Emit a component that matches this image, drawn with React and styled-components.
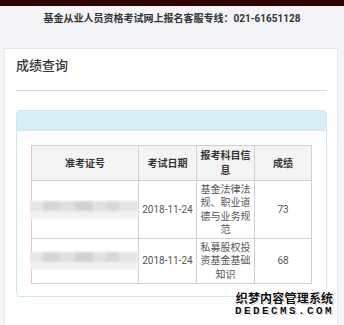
import React from "react";
import styled, { createGlobalStyle } from "styled-components";

const GlobalStyle = createGlobalStyle`
  html, body {
    margin: 0;
    padding: 0;
    background: #f3f4f7;
    font-family: Roboto, "Noto Sans CJK SC", sans-serif;
  }
`;

const Page = styled.div`
  position: relative;
  width: 344px;
  min-height: 100vh;
  display: flex;
  flex-direction: column;
`;

const TopBar = styled.div`
  height: 6px;
  background: #310000;
`;

const Hotline = styled.div`
  height: 42px;
  box-sizing: border-box;
  padding-top: 6px;
  text-align: center;
  font-size: 10px;
  line-height: 14px;
  font-weight: bold;
  color: #333;
`;

const Card = styled.div`
  flex: 1;
  margin: 0 6px 0 4px;
  padding: 0 10px 0 11px;
  background: #fff;
  border-top: 1px solid #e3e3e3;
  border-left: 1px solid #e8e8ec;
  border-right: 1px solid #e8e8ec;
`;

const Title = styled.h3`
  margin: 0;
  padding-top: 8px;
  padding-bottom: 15px;
  font-size: 13px;
  line-height: 18px;
  font-weight: 500;
  color: #333;
  border-bottom: 1px solid #dcdcdc;
`;

const Panel = styled.div`
  margin-top: 19px;
  border: 1px solid #c6e9f2;
  border-radius: 4px;
  overflow: hidden;
`;

const PanelHeading = styled.div`
  height: 19px;
  background: #d9edf7;
  border-bottom: 1px solid #c6e9f2;
`;

const PanelBody = styled.div`
  padding: 14px 14px 12px;
`;

const Table = styled.table`
  width: 280px;
  border-collapse: collapse;
  table-layout: fixed;
  font-size: 10px;
`;

const HeadCell = styled.th`
  box-sizing: border-box;
  width: ${(p) => p.w}px;
  padding: 2px 3px;
  background: #f4f4f4;
  border: 1px solid #cfcfcf;
  color: #333;
  font-weight: bold;
  line-height: 15px;
  text-align: center;
  vertical-align: middle;
`;

const Cell = styled.td`
  padding: ${(p) => (p.flush ? "2px 0" : "2px 3px")};
  border: 1px solid #cfcfcf;
  color: #555;
  line-height: 13.3px;
  text-align: center;
  vertical-align: middle;
  white-space: ${(p) => (p.nowrap ? "nowrap" : "normal")};
`;

const Blurred = styled.div`
  height: 18px;
  margin-left: -2px;
  background:
    linear-gradient(to bottom, transparent 55%, #f1f1f1 55%),
    linear-gradient(
      to right,
      #e6e6e6 0 12%,
      #d6d6d6 12% 28%,
      #e0e0e0 28% 42%,
      #d2d2d2 42% 58%,
      #e2e2e2 58% 70%,
      #d8d8d8 70% 82%,
      #e4e4e4 82% 100%
    );
  filter: blur(1px);
`;

const Watermark = styled.div`
  position: absolute;
  right: 10px;
  bottom: 8px;
  display: flex;
  flex-direction: column;
  align-items: center;
  gap: 2px;
  color: #111;
  font-weight: bold;
  text-shadow: 1px 0 #fff, -1px 0 #fff, 0 1px #fff, 0 -1px #fff, 1px 1px #999;
`;

const WatermarkCn = styled.span`
  font-family: "Noto Sans CJK SC", sans-serif;
  font-size: 12px;
  line-height: 13px;
  letter-spacing: 0.2px;
`;

const WatermarkEn = styled.span`
  font-family: "Liberation Mono", monospace;
  font-size: 11px;
  line-height: 11px;
  letter-spacing: 2.4px;
`;

const rows = [
  { date: "2018-11-24", subject: "基金法律法规、职业道德与业务规范", score: 73 },
  { date: "2018-11-24", subject: "私募股权投资基金基础知识", score: 68 },
];

export default function App() {
  return (
    <>
      <GlobalStyle />
      <Page>
        <TopBar />
        <Hotline>基金从业人员资格考试网上报名客服专线：021-61651128</Hotline>
        <Card>
          <Title>成绩查询</Title>
          <Panel>
            <PanelHeading />
            <PanelBody>
              <Table>
                <thead>
                  <tr>
                    <HeadCell w={107}>准考证号</HeadCell>
                    <HeadCell w={58}>考试日期</HeadCell>
                    <HeadCell w={58}>报考科目信息</HeadCell>
                    <HeadCell w={57}>成绩</HeadCell>
                  </tr>
                </thead>
                <tbody>
                  {rows.map((row, i) => (
                    <tr key={i}>
                      <Cell flush>
                        <Blurred />
                      </Cell>
                      <Cell nowrap flush>{row.date}</Cell>
                      <Cell>{row.subject}</Cell>
                      <Cell>{row.score}</Cell>
                    </tr>
                  ))}
                </tbody>
              </Table>
            </PanelBody>
          </Panel>
        </Card>
        <Watermark>
          <WatermarkCn>织梦内容管理系统</WatermarkCn>
          <WatermarkEn>DEDECMS.COM</WatermarkEn>
        </Watermark>
      </Page>
    </>
  );
}
